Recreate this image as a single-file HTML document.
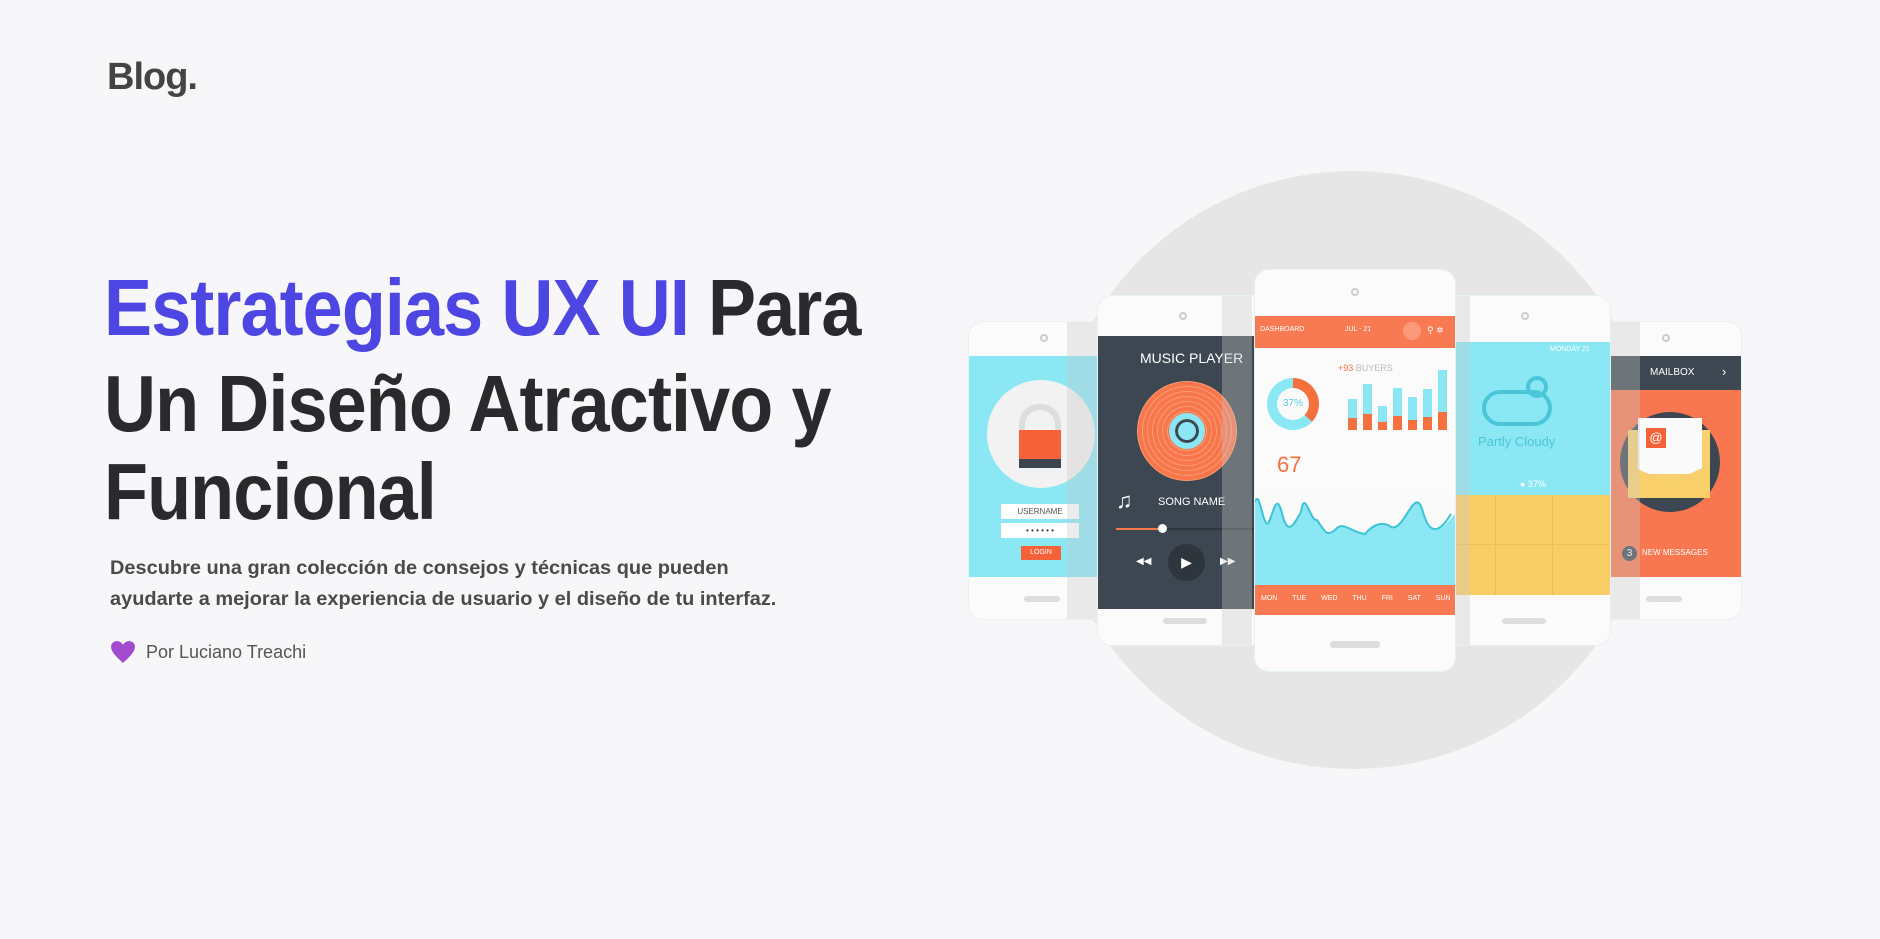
<!DOCTYPE html>
<html><head><meta charset="utf-8">
<style>
*{margin:0;padding:0;box-sizing:border-box}
body{width:1880px;height:939px;background:#f7f6f9;font-family:"Liberation Sans",sans-serif;position:relative;overflow:hidden}
.a{position:absolute}
.logo{left:107px;top:56px;font-size:38px;font-weight:bold;color:#444;letter-spacing:-1px}
.h{left:104px;font-size:80px;font-weight:bold;color:#2a2a2c;white-space:nowrap;transform-origin:left top;transform:scaleX(0.9);letter-spacing:-1px}
.h .b{color:#4d46e3}
.p{left:110px;top:553px;font-size:19px;color:#4a4a4a;line-height:31px;font-weight:bold;transform-origin:left top;transform:scaleX(1.05)}
.by{left:110px;top:640px;font-size:18px;color:#555;display:flex;align-items:center}
.phone{background:#fbfbfc;border-radius:14px;box-shadow:0 0 0 1px #e6f3f4}
.cam{width:8px;height:8px;border:2px solid #ccc;border-radius:50%;left:50%;margin-left:-4px}
.btn{height:6px;background:#ddd;border-radius:3px}
.t{color:#fff;font-size:11px;white-space:nowrap}
.bar{position:absolute;width:9px;background:#8be7f4;border-bottom:solid #f5703f}
</style></head><body>
<div class="a logo">Blog.</div>
<div class="a h" style="top:262px"><span class="b">Estrategias UX UI</span> Para</div>
<div class="a h" style="top:358px">Un Diseño Atractivo y</div>
<div class="a h" style="top:446px">Funcional</div>
<div class="a p">Descubre una gran colección de consejos y técnicas que pueden<br>ayudarte a mejorar la experiencia de usuario y el diseño de tu interfaz.</div>
<div class="a by"><svg width="26" height="24" viewBox="0 0 24 22"><path d="M12 21 C4 14 1 10 1 6 C1 3 3.5 1 6.5 1 C9 1 11 2.5 12 4.5 C13 2.5 15 1 17.5 1 C20.5 1 23 3 23 6 C23 10 20 14 12 21Z" fill="#a24bd0"/></svg><span style="margin-left:10px">Por Luciano Treachi</span></div>

<div class="a" style="left:1053px;top:171px;width:600px;height:598px;border-radius:50%;background:#e6e6e6"></div>

<!-- login phone -->
<div class="a phone" style="left:969px;top:322px;width:150px;height:297px">
 <div class="a cam" style="top:12px"></div>
 <div class="a" style="left:0;top:34px;width:150px;height:221px;background:#8be7f4"></div>
 <div class="a" style="left:18px;top:58px;width:108px;height:108px;border-radius:50%;background:#f2f2f2"></div>
 <div class="a" style="left:50px;top:82px;width:42px;height:36px;border:6px solid #ddd;border-bottom:none;border-radius:20px 20px 0 0"></div>
 <div class="a" style="left:50px;top:108px;width:42px;height:38px;background:#f5623a;border-bottom:9px solid #3b4650"></div>
 <div class="a" style="left:32px;top:182px;width:78px;height:15px;background:#fff;font-size:8px;color:#555;text-align:center;line-height:15px">USERNAME</div>
 <div class="a" style="left:32px;top:201px;width:78px;height:15px;background:#fff;font-size:8px;color:#333;text-align:center;line-height:15px">• • • • • •</div>
 <div class="a" style="left:52px;top:224px;width:40px;height:14px;background:#f5623a;font-size:7px;color:#fff;text-align:center;line-height:14px">LOGIN</div>
 <div class="a btn" style="left:55px;top:274px;width:36px"></div>
 <div class="a" style="left:98px;top:0;width:30px;height:297px;background:rgba(200,200,200,.35)"></div>
</div>
<!-- mail phone -->
<div class="a phone" style="left:1590px;top:322px;width:151px;height:297px">
 <div class="a cam" style="top:12px"></div>
 <div class="a" style="left:0;top:34px;width:151px;height:34px;background:#3d4751"></div>
 <div class="a t" style="left:60px;top:45px;font-size:10px">MAILBOX</div>
 <div class="a t" style="left:132px;top:42px;font-size:13px">›</div>
 <div class="a" style="left:0;top:68px;width:151px;height:187px;background:#f87750"></div>
 <div class="a" style="left:30px;top:90px;width:100px;height:100px;border-radius:50%;background:#3d4751"></div>
 <div class="a" style="left:38px;top:108px;width:82px;height:68px;background:#f8d070"></div>
 <div class="a" style="left:48px;top:96px;width:64px;height:56px;background:#fafafa"></div>
 <div class="a" style="left:56px;top:106px;width:20px;height:20px;background:#f5623a;color:#fff;font-size:13px;text-align:center;line-height:20px">@</div>
 <div class="a" style="left:38px;top:128px;width:82px;height:48px;background:#f9cf6a;clip-path:polygon(0 30%,50% 70%,100% 30%,100% 100%,0 100%)"></div>
 <div class="a" style="left:32px;top:224px;width:15px;height:15px;border-radius:50%;background:#3d4751;color:#fff;font-size:10px;text-align:center;line-height:15px">3</div>
 <div class="a t" style="left:52px;top:226px;font-size:8px">NEW MESSAGES</div>
 <div class="a btn" style="left:56px;top:274px;width:36px"></div>
 <div class="a" style="left:20px;top:0;width:30px;height:297px;background:rgba(200,200,200,.35)"></div>
</div>
<!-- music phone -->
<div class="a phone" style="left:1098px;top:296px;width:170px;height:349px">
 <div class="a cam" style="top:16px"></div>
 <div class="a" style="left:0;top:40px;width:170px;height:273px;background:#3d4751"></div>
 <div class="a t" style="left:42px;top:54px;font-size:14px">MUSIC PLAYER</div>
 <div class="a" style="left:39px;top:85px;width:100px;height:100px;border-radius:50%;background:repeating-radial-gradient(circle,#f8764b 0 4px,#fa9a72 4px 5px)"></div>
 <div class="a" style="left:71px;top:117px;width:36px;height:36px;border-radius:50%;background:#8be7f4;border:6px solid #8be7f4;box-shadow:inset 0 0 0 3px #3d4751"></div>
 <div class="a t" style="left:18px;top:192px;font-size:22px">♫</div>
 <div class="a t" style="left:60px;top:200px;font-size:11px">SONG NAME</div>
 <div class="a" style="left:18px;top:232px;width:152px;height:2px;background:#2e353c"></div>
 <div class="a" style="left:18px;top:232px;width:46px;height:2px;background:#f8764b"></div>
 <div class="a" style="left:60px;top:228px;width:9px;height:9px;border-radius:50%;background:#fff"></div>
 <div class="a t" style="left:38px;top:260px;font-size:10px">◀◀</div>
 <div class="a" style="left:70px;top:248px;width:37px;height:37px;border-radius:50%;background:#2e353c;color:#fff;font-size:14px;text-align:center;line-height:37px">▶</div>
 <div class="a t" style="left:122px;top:260px;font-size:10px">▶▶</div>
 <div class="a btn" style="left:65px;top:322px;width:44px"></div>
 <div class="a" style="left:124px;top:0;width:30px;height:349px;background:rgba(200,200,200,.35)"></div>
</div>
<!-- weather phone -->
<div class="a phone" style="left:1440px;top:296px;width:170px;height:349px">
 <div class="a cam" style="top:16px"></div>
 <div class="a" style="left:0;top:46px;width:170px;height:153px;background:#8be7f4"></div>
 <div class="a" style="left:0;top:199px;width:170px;height:100px;background:#f9cd65;background-image:linear-gradient(to right,transparent 55px,#f3bf55 55px 56px,transparent 56px 112px,#f3bf55 112px 113px,transparent 113px),linear-gradient(transparent 49px,#f3bf55 49px 50px,transparent 50px)"></div>
 <div class="a t" style="left:110px;top:50px;font-size:7px">MONDAY 21</div>
 <div class="a" style="left:42px;top:94px;width:70px;height:36px;border:4px solid #4bc6d8;border-radius:20px"></div>
 <div class="a" style="left:86px;top:80px;width:22px;height:22px;border:4px solid #4bc6d8;border-radius:50%"></div>
 <div class="a" style="left:38px;top:138px;font-size:13px;color:#4bc6d8">Partly Cloudy</div>
 <div class="a t" style="left:80px;top:183px;font-size:9px">● 37%</div>
 <div class="a" style="left:0;top:0;width:30px;height:349px;background:rgba(200,200,200,.35)"></div>
 <div class="a btn" style="left:62px;top:322px;width:44px"></div>
</div>
<!-- center phone -->
<div class="a phone" style="left:1255px;top:270px;width:200px;height:401px">
 <div class="a cam" style="top:18px"></div>
 <div class="a" style="left:0;top:46px;width:200px;height:32px;background:#f87a52"></div>
 <div class="a t" style="left:5px;top:56px;font-size:7px">DASHBOARD</div>
 <div class="a t" style="left:90px;top:56px;font-size:7px">JUL - 21</div>
 <div class="a" style="left:148px;top:52px;width:18px;height:18px;border-radius:50%;background:#fa9a7a"></div>
 <div class="a t" style="left:172px;top:55px;font-size:9px">⚲ ✲</div>
 <div class="a" style="left:12px;top:108px;width:52px;height:52px;border-radius:50%;background:conic-gradient(#f5703f 0 37%,#8be7f4 37% 100%)"></div>
 <div class="a" style="left:22px;top:118px;width:32px;height:32px;border-radius:50%;background:#fafafa;font-size:10px;color:#56cde0;text-align:center;line-height:32px">37%</div>
 <div class="a" style="left:83px;top:93px;font-size:9px;color:#f5703f;white-space:nowrap">+93 <span style="color:#bbb">BUYERS</span></div>
 <div class="bar" style="left:93px;top:129px;height:31px;border-bottom-width:12px"></div>
 <div class="bar" style="left:108px;top:114px;height:46px;border-bottom-width:16px"></div>
 <div class="bar" style="left:123px;top:136px;height:24px;border-bottom-width:8px"></div>
 <div class="bar" style="left:138px;top:118px;height:42px;border-bottom-width:14px"></div>
 <div class="bar" style="left:153px;top:127px;height:33px;border-bottom-width:10px"></div>
 <div class="bar" style="left:168px;top:119px;height:41px;border-bottom-width:13px"></div>
 <div class="bar" style="left:183px;top:100px;height:60px;border-bottom-width:18px"></div>
 <div class="a" style="left:22px;top:182px;font-size:22px;color:#f5703f">67</div>
 <div class="a" style="left:0;top:230px;width:200px;height:85px;background:#8be7f4"></div>
 <svg class="a" style="left:0;top:222px" width="200" height="50"><path d="M0 0 L200 0 L200 22 C185 40 175 45 168 20 C160 -10 150 40 136 35 C130 30 120 30 110 42 C95 40 88 28 80 38 C72 45 70 40 62 28 C55 30 50 -5 46 20 C40 30 34 45 28 25 C22 0 20 15 14 30 C8 40 5 -5 0 10Z" fill="#fafafa"/><path d="M0 10 C5 -5 8 40 14 30 C20 15 22 0 28 25 C34 45 40 30 46 20 C50 -5 55 30 62 28 C70 40 72 45 80 38 C88 28 95 40 110 42 C120 30 130 30 136 35 C150 40 160 -10 168 20 C175 45 185 40 196 22" fill="none" stroke="#3cc4d6" stroke-width="2"/></svg>
 <div class="a" style="left:0;top:315px;width:200px;height:30px;background:#f87a52"></div>
 <div class="a t" style="left:6px;top:325px;font-size:7px;word-spacing:13px">MON TUE WED THU FRI SAT SUN</div>
 <div class="a btn" style="left:75px;top:371px;width:50px;height:7px"></div>
</div>
</body></html>
